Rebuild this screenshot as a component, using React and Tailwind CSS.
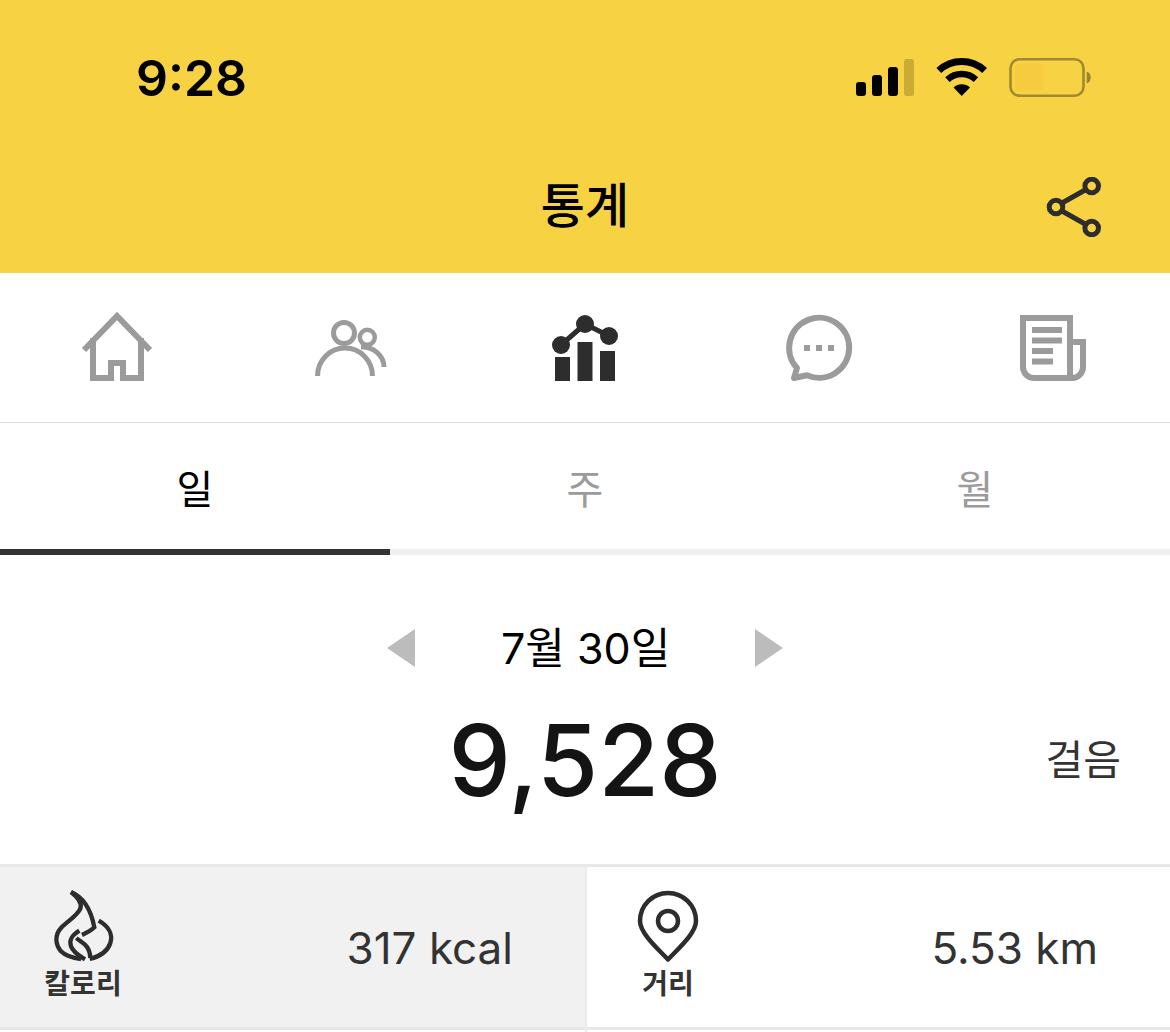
import React from "react";

const font = "font-['Inter','Noto_Sans_CJK_KR',sans-serif]";

const HomeIcon = () => (
  <svg width="80" height="80" viewBox="77 307 80 80" fill="none" stroke="#9b9b9b" strokeWidth="6">
    <path d="M84 350 L117 316 L150 350" />
    <path d="M93 338 V378 H111 V363 H123 V378 H141 V338" />
  </svg>
);

const PeopleIcon = () => (
  <svg width="80" height="80" viewBox="311 307 80 80" fill="none" stroke="#9b9b9b" strokeWidth="5">
    <circle cx="344" cy="333" r="10.5" />
    <circle cx="367.3" cy="337.3" r="7.5" strokeWidth="4.5" />
    <path d="M317.5 376 A27.5 28 0 0 1 372.5 376" />
    <path d="M361 347 A22 20 0 0 1 384 367" />
  </svg>
);

const ChartIcon = () => (
  <svg width="80" height="80" viewBox="545 307 80 80" fill="#2d2d2d">
    <path d="M561 345 L585 324 L609 336" fill="none" stroke="#2d2d2d" strokeWidth="5" />
    <circle cx="561" cy="345" r="9" />
    <circle cx="585" cy="324" r="9" />
    <circle cx="609" cy="336" r="9" />
    <rect x="555" y="357" width="15" height="24" />
    <rect x="577.5" y="342" width="15" height="39" />
    <rect x="600" y="351" width="15" height="30" />
  </svg>
);

const ChatIcon = () => (
  <svg width="80" height="80" viewBox="779 307 80 80" fill="none" stroke="#9b9b9b" strokeWidth="6">
    <path d="M797 368 A30 30 0 1 1 807 375.2 L794 378 Z" strokeLinejoin="round" />
    <g fill="#9b9b9b" stroke="none">
      <rect x="804" y="345" width="6" height="6" />
      <rect x="816" y="345" width="6" height="6" />
      <rect x="828" y="345" width="6" height="6" />
    </g>
  </svg>
);

const NewsIcon = () => (
  <svg width="80" height="80" viewBox="1013 307 80 80" fill="none" stroke="#9b9b9b" strokeWidth="6">
    <path d="M1023 318 H1070 V378 H1034 A11 11 0 0 1 1023 367 Z" />
    <path d="M1070 342 H1083 V367 A11 11 0 0 1 1072 378 H1070" />
    <g fill="#9b9b9b" stroke="none">
      <rect x="1032" y="327" width="30" height="6" />
      <rect x="1032" y="337.5" width="30" height="6" />
      <rect x="1032" y="348" width="21" height="6" />
      <rect x="1032" y="358.5" width="21" height="6" />
    </g>
  </svg>
);

const ShareIcon = () => (
  <svg width="60" height="60" viewBox="1044 177 60 60" fill="none" stroke="#2d2d2d" strokeWidth="5">
    <path d="M1062 203 L1086 189.5 M1062 211 L1086 224.5" />
    <circle cx="1091.7" cy="186" r="6.8" />
    <circle cx="1056" cy="207" r="6.8" />
    <circle cx="1091.7" cy="228" r="6.8" />
  </svg>
);

const StatusIcons = () => (
  <svg width="240" height="44" viewBox="852 56 240 44">
    <rect x="856" y="82" width="10" height="14" rx="3" />
    <rect x="872" y="75" width="10" height="21" rx="3" />
    <rect x="888" y="67" width="10" height="29" rx="3" />
    <rect x="904" y="59" width="10" height="37" rx="3" fill="#c9ab35" />
    <g fill="none" stroke="#000">
      <path d="M938.8 70.5 A33.5 33.5 0 0 1 984.6 70.5" strokeWidth="7" />
      <path d="M947.4 79.6 A21 21 0 0 1 976 79.6" strokeWidth="6.5" />
    </g>
    <path d="M953.5 87.5 A12 12 0 0 1 970 87.5 L961.7 96 Z" />
    <rect x="1010.5" y="59.2" width="73" height="36.5" rx="9" fill="none" stroke="#a08a30" strokeWidth="2.6" />
    <rect x="1015" y="63.5" width="28" height="27" rx="4" fill="#f6cb3f" />
    <path d="M1086.7 71.7 A4 5.8 0 0 1 1086.7 83.3 Z" fill="#9a8430" />
  </svg>
);

const FlameIcon = () => (
  <svg width="72" height="78" viewBox="0 0 216 234" fill="none" stroke="#2d2d2d" strokeWidth="13">
    <path d="M72 12 C110 28 132 65 142 118 C132 128 120 134 105 141" />
    <path d="M72 12 C95 30 106 45 100 62 C90 85 60 100 42 120 C22 142 25 170 42 190 C55 203 75 210 102 213" />
    <path d="M97 128 C75 142 65 155 72 175 C80 195 100 205 114 214" />
    <path d="M88 150 C105 165 128 170 130 210" />
    <path d="M155 98 C185 115 198 140 190 165 C182 190 160 205 128 213" />
  </svg>
);

const PinIcon = () => (
  <svg width="64" height="78" viewBox="637 888 64 78" fill="none" stroke="#2d2d2d" strokeWidth="4.5">
    <path d="M669 959.5 C658 948 641 933 641 921 A28 28 0 0 1 697 921 C697 933 680 948 669 959.5 Z" strokeLinejoin="round" />
    <circle cx="669" cy="921" r="10" />
  </svg>
);

const Triangle = ({ dir }) => (
  <svg width="28" height="38" viewBox="0 0 28 38" fill="#bcbcbc">
    <path d={dir === "left" ? "M28 0 V38 L0 19 Z" : "M0 0 V38 L28 19 Z"} />
  </svg>
);

const navIcons = [HomeIcon, PeopleIcon, ChartIcon, ChatIcon, NewsIcon];

const App = () => {
  return (
    <div className={`w-[1170px] h-[1032px] overflow-hidden bg-white ${font}`}>
      <div className="h-[273px] bg-[#f7d344] flex flex-col">
        <div className="h-[156px] flex items-center justify-between pl-[136px] pr-[78px]">
          <span className="text-[50px] leading-none font-semibold text-black">9:28</span>
          <StatusIcons />
        </div>
        <div className="grid grid-cols-[1fr_auto_1fr] items-center h-[102px]">
          <span />
          <span className="text-[48px] leading-none font-medium text-black -mt-[2px]">통계</span>
          <div className="flex justify-end pr-[66px]">
            <ShareIcon />
          </div>
        </div>
      </div>

      <div className="grid grid-cols-5 h-[149px] items-center justify-items-center pb-[2px]">
        {navIcons.map((Icon, i) => (
          <Icon key={i} />
        ))}
      </div>

      <div className="grid grid-cols-3 h-[133px] border-t border-[#dfdfdf]">
        <div className="flex items-center justify-center pt-[8px] border-b-[6px] border-[#333333] text-[40px] text-black">일</div>
        <div className="flex items-center justify-center pt-[8px] border-b-[6px] border-[#eeeeee] text-[40px] text-[#9b9b9b]">주</div>
        <div className="flex items-center justify-center pt-[8px] border-b-[6px] border-[#eeeeee] text-[40px] text-[#9b9b9b]">월</div>
      </div>

      <div className="flex flex-col items-center h-[309px] pt-[58px]">
        <div className="flex items-center gap-[86px] h-[70px]">
          <Triangle dir="left" />
          <span className="text-[43px] leading-none text-black w-[168px] text-center whitespace-nowrap">7월 30일</span>
          <Triangle dir="right" />
        </div>
        <div className="grid grid-cols-[1fr_auto_1fr] items-center w-full h-[110px] mt-[22px]">
          <span />
          <span className="text-[99px] leading-none font-medium text-[#141414]">9,528</span>
          <span className="text-[41px] leading-none text-[#333333] text-right pr-[49px]">걸음</span>
        </div>
      </div>

      <div className="grid grid-cols-[587px_1fr] border-t-[3px] border-[#e8e8e8] h-[168px]">
        <div className="border-r-2 border-[#ebebeb]">
          <div className="h-[160px] bg-[#f1f1f1] border-b-[3px] border-[#e8e8e8] box-content flex items-center justify-between pl-[43px] pr-[72px]">
            <div className="flex flex-col items-center w-[80px] mb-[8px]">
              <FlameIcon />
              <span className="text-[28px] leading-none font-bold text-[#333333] mt-[4px]">칼로리</span>
            </div>
            <span className="text-[44px] leading-none text-[#333333] mt-[2px]">317 kcal</span>
          </div>
        </div>
        <div className="h-[160px] border-b-[3px] border-[#e8e8e8] box-content flex items-center justify-between pl-[41px] pr-[72px]">
          <div className="flex flex-col items-center w-[80px] mb-[8px]">
            <PinIcon />
            <span className="text-[28px] leading-none font-semibold text-[#333333] mt-[4px]">거리</span>
          </div>
          <span className="text-[44px] leading-none text-[#333333] mt-[2px]">5.53 km</span>
        </div>
      </div>
    </div>
  );
};

export default App;
